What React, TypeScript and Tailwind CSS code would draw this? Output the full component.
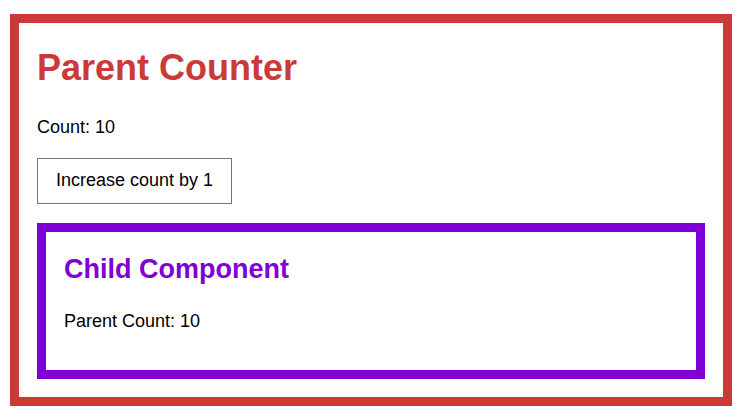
export default function App() {
  const count = 10;

  return (
    <div className="min-h-[420px] bg-white pl-[10px] pt-[14px] font-['Liberation_Sans',Arial,sans-serif] text-black">
      {/* Parent */}
      <div className="w-[722px] border-[9px] border-[#ca3a37] px-[18px] pb-[18px]">
        <h1 className="mt-[23.5px] text-[36px] font-bold leading-[42px] text-[#ca3a37]">
          Parent Counter
        </h1>
        <p className="mt-[28px] text-[18px] leading-[21px]">Count: {count}</p>
        <button className="mt-[20px] flex h-[46px] w-[195px] items-center justify-center border border-[#767676] bg-white text-[18px] leading-[21px]">
          Increase count by 1
        </button>

        {/* Child */}
        <div className="mt-[19px] border-[9px] border-[#7f00d4] px-[18px] pb-[38.5px]">
          <h2 className="mt-[22px] text-[27px] font-bold leading-[31px] text-[#7f00d4]">
            Child Component
          </h2>
          <p className="mt-[26px] text-[18px] leading-[21px]">Parent Count: {count}</p>
        </div>
      </div>
    </div>
  );
}
